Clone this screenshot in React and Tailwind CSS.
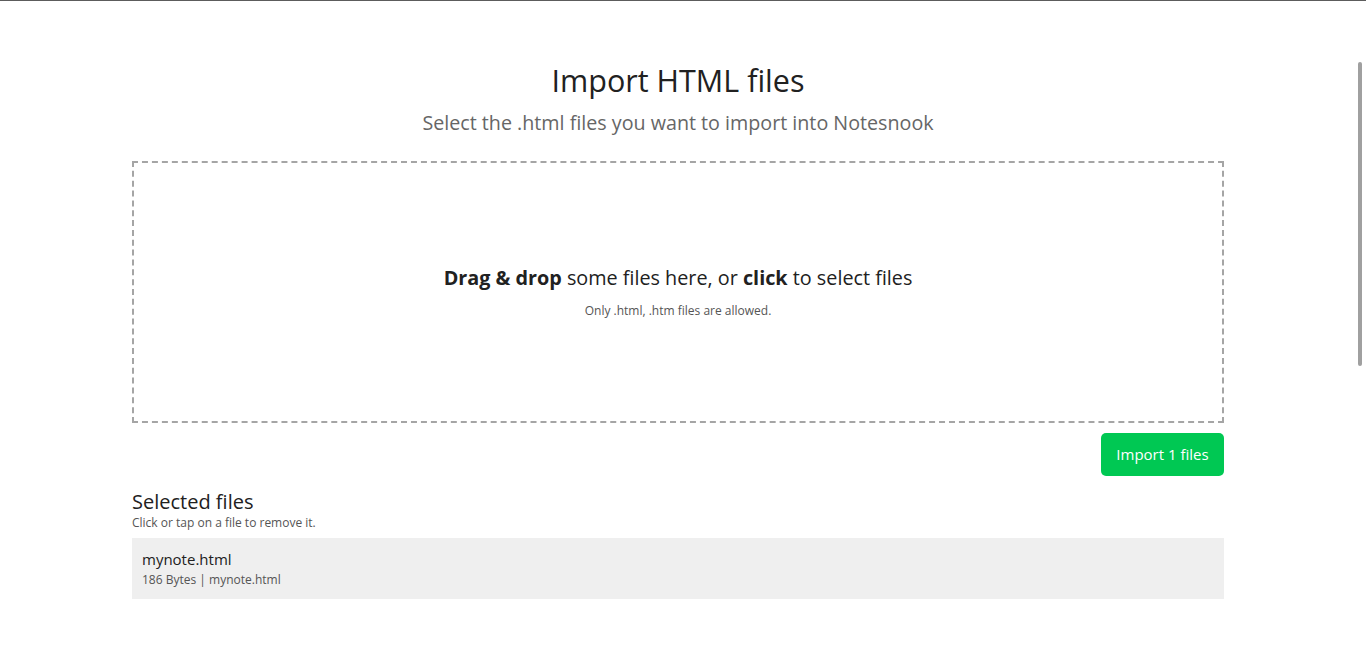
import React from "react";

const files = [{ name: "mynote.html", size: "186 Bytes", path: "mynote.html" }];

const App = () => {
  return (
    <div
      className="relative min-h-[660px] bg-white border-t border-[#5c5c5c] text-[#212121] pr-[10px]"
      style={{ fontFamily: '"Open Sans", "Noto Sans", sans-serif' }}
    >
      {/* overlay scrollbar */}
      <div className="absolute right-[4px] top-[61px] w-[4px] h-[304px] rounded-full bg-[#a0a0a0]" />

      <div className="mx-auto w-[1092px] pt-[59px] flex flex-col">
        <h1 className="text-center text-[30.5px] leading-[40px]">Import HTML files</h1>
        <p className="text-center text-[19.7px] leading-[26px] mt-[10px] text-[#666666]">
          Select the .html files you want to import into Notesnook
        </p>

        <div className="mt-[25px] h-[262px] border-2 border-dashed border-[#a5a5a5] flex flex-col items-center justify-center cursor-pointer">
          <p className="text-[19.8px] leading-[26px]">
            <span className="font-bold">Drag &amp; drop</span> some files here, or{" "}
            <span className="font-bold">click</span> to select files
          </p>
          <p className="text-[12px] leading-[16px] mt-[12px] text-[#555555]">
            Only .html, .htm files are allowed.
          </p>
        </div>

        <div className="flex justify-end mt-[10px]">
          <button className="h-[43px] w-[123px] rounded-[5px] bg-[#00c853] text-white text-[15px]">
            Import 1 files
          </button>
        </div>

        <h2 className="text-[20px] leading-[26px] mt-[13px]">Selected files</h2>
        <p className="text-[12px] leading-[16px] text-[#555555]">Click or tap on a file to remove it.</p>

        <div className="mt-[7px] flex flex-col">
          {files.map((f) => (
            <div key={f.name} className="bg-[#efefef] px-[10px] py-[10px] h-[61px] cursor-pointer">
              <p className="text-[15px] leading-[22px]">{f.name}</p>
              <p className="text-[12px] leading-[16px] mt-[2px] text-[#555555]">
                {f.size} | {f.path}
              </p>
            </div>
          ))}
        </div>
      </div>
    </div>
  );
};

export default App;
